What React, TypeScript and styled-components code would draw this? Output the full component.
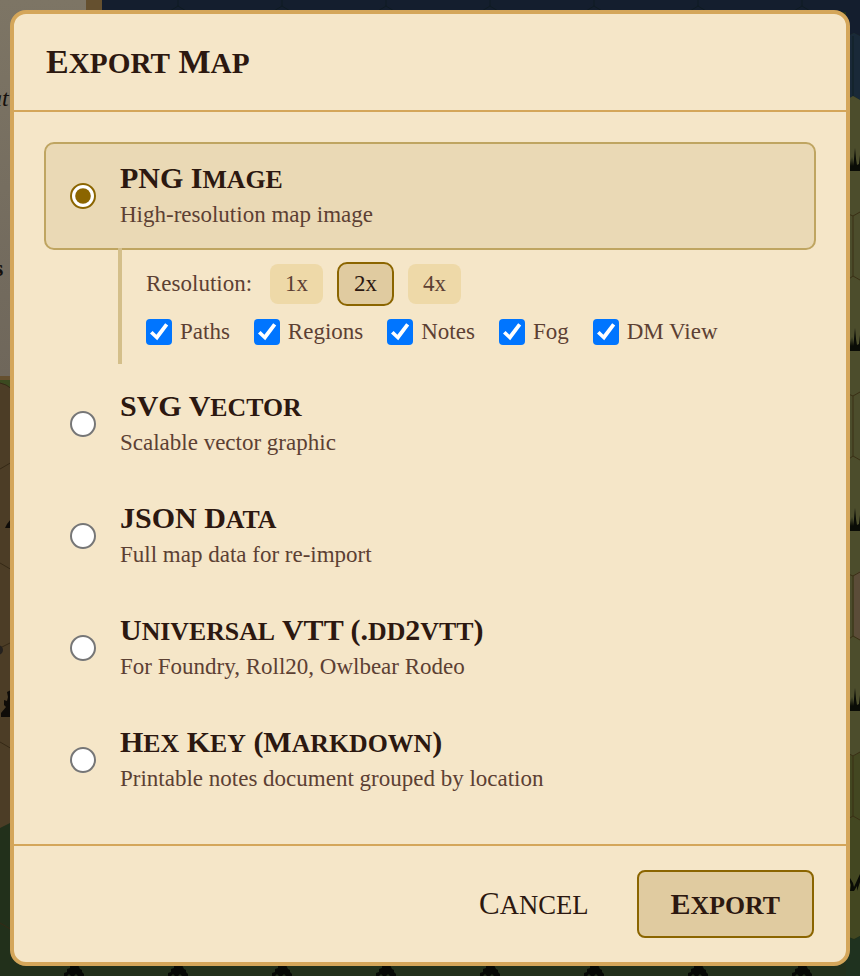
import React, { useState } from 'react';
import styled, { createGlobalStyle } from 'styled-components';

const GlobalStyle = createGlobalStyle`
  * { box-sizing: border-box; }
  body { margin: 0; background: #1d2c1c; }
`;

const serif = `'Liberation Serif', 'Times New Roman', serif`;

const Page = styled.div`
  position: relative;
  min-height: 100vh;
  overflow: hidden;
  font-family: ${serif};
  color: #2c1810;
`;

const Backdrop = styled.svg`
  position: absolute;
  inset: 0;
  width: 100%;
  height: 100%;
`;

const SidePanel = styled.aside`
  position: absolute;
  top: 0;
  left: 0;
  width: 102px;
  height: 380px;
  padding-top: 84px;
  overflow: hidden;
  background: linear-gradient(#7d7565, #6f675b);
  border-right: 16px solid #65502f;
  border-bottom: 4px solid #65502f;
`;

const PanelText = styled.p<{ $strong?: boolean }>`
  margin: 0 0 142px ${p => (p.$strong ? -6 : -10)}px;
  font-size: 24px;
  line-height: 28px;
  font-style: ${p => (p.$strong ? 'normal' : 'italic')};
  font-weight: ${p => (p.$strong ? 700 : 400)};
  color: #15100c;
`;

const Overlay = styled.div`
  position: relative;
  padding: 10px;
`;

const Dialog = styled.form`
  background: #f5e6c8;
  border: 4px solid #d4a65a;
  border-radius: 16px;
`;

const Header = styled.header`
  padding: 26px 32px;
  border-bottom: 2px solid #d4a65a;
`;

const Title = styled.h2`
  margin: 0;
  font-size: 34px;
  line-height: 44px;
  font-weight: 700;
`;

const SmallCaps = styled.span`
  font-size: 0.86em;
  line-height: 1;
  text-transform: uppercase;
`;

const Body = styled.div`
  display: flex;
  flex-direction: column;
  gap: 4px;
  padding: 30px;
`;

const Option = styled.label<{ $selected: boolean }>`
  display: flex;
  align-items: center;
  gap: 24px;
  height: 108px;
  padding: 0 24px;
  border: 2px solid ${p => (p.$selected ? '#bfa561' : 'transparent')};
  border-radius: 10px;
  background: ${p => (p.$selected ? '#ead9b5' : 'transparent')};
  cursor: pointer;
`;

const Radio = styled.input`
  width: 13px;
  height: 13px;
  margin: 0;
  zoom: 2;
  accent-color: #8b6500;
`;

const OptionName = styled.span`
  display: block;
  font-size: 30px;
  line-height: 38px;
  font-weight: 700;
`;

const OptionHint = styled.span`
  display: block;
  font-size: 23px;
  line-height: 36px;
  color: #5c4033;
`;

const Details = styled.div`
  display: flex;
  flex-direction: column;
  gap: 12px;
  margin: -6px 0 2px 74px;
  padding: 14px 0 18px 24px;
  border-left: 4px solid #d4bf8a;
  font-size: 23px;
  line-height: 28px;
  color: #5c4033;
`;

const Resolutions = styled.div`
  display: flex;
  align-items: center;
  gap: 14px;
  height: 44px;
`;

const ResolutionLabel = styled.span`
  padding-right: 4px;
`;

const Scale = styled.button<{ $active: boolean }>`
  padding: 6px 15px;
  border: ${p => (p.$active ? '2px solid #8b6500' : '0')};
  border-radius: ${p => (p.$active ? 10 : 8)}px;
  background: ${p => (p.$active ? '#e0cba0' : '#eed9a8')};
  color: ${p => (p.$active ? '#2c1810' : '#5c4033')};
  font: 23px/28px ${serif};
  cursor: pointer;
`;

const Layers = styled.div`
  display: flex;
  flex-wrap: wrap;
  gap: 24px;
`;

const Layer = styled.label`
  display: flex;
  align-items: center;
  gap: 8px;
  cursor: pointer;
`;

const tick = encodeURIComponent(
  `<svg xmlns="http://www.w3.org/2000/svg" viewBox="0 0 26 26"><path d="M4 14.6 6.6 12 10.4 15.8 19.2 4.2 22.2 6.4 11.2 21.2Z" fill="white"/></svg>`
);

const Check = styled.input`
  appearance: none;
  width: 26px;
  height: 26px;
  margin: 0;
  border: 2px solid #767676;
  border-radius: 4px;
  background: #fff;

  &:checked {
    border: 0;
    background: #0075ff url("data:image/svg+xml,${tick}") center / 26px no-repeat;
  }
`;

const Footer = styled.footer`
  display: flex;
  justify-content: flex-end;
  gap: 14px;
  padding: 24px 32px;
  border-top: 2px solid #d4a65a;
`;

const Action = styled.button<{ $primary?: boolean }>`
  height: 68px;
  padding: 0 32px;
  border: 2px solid ${p => (p.$primary ? '#8b6500' : 'transparent')};
  border-radius: 8px;
  background: ${p => (p.$primary ? '#e0cba0' : 'transparent')};
  color: #2c1810;
  font: ${p => (p.$primary ? '700 30px' : '400 31px')}/36px ${serif};
  cursor: pointer;
`;

function Caps({ text }: { text: string }) {
  return (
    <>
      {text.split(/([a-z]+)/).map((run, i) =>
        i % 2 ? <SmallCaps key={i}>{run}</SmallCaps> : run
      )}
    </>
  );
}

const formats = [
  { id: 'png', name: 'PNG Image', hint: 'High-resolution map image' },
  { id: 'svg', name: 'SVG Vector', hint: 'Scalable vector graphic' },
  { id: 'json', name: 'JSON Data', hint: 'Full map data for re-import' },
  { id: 'vtt', name: 'Universal VTT (.dd2vtt)', hint: 'For Foundry, Roll20, Owlbear Rodeo' },
  { id: 'key', name: 'Hex Key (Markdown)', hint: 'Printable notes document grouped by location' },
];

const layers = ['Paths', 'Regions', 'Notes', 'Fog', 'DM View'];
const grassRows = [171, 351, 531, 711];
const treeColumns = [73, 177, 281, 385, 489, 593, 697, 801];
const hexColumns = [178, 282, 386, 490, 594, 698, 802];

function MapBackdrop() {
  return (
    <Backdrop viewBox="0 0 860 976" preserveAspectRatio="xMidYMid slice" aria-hidden="true">
      <rect width="860" height="976" fill="#22301b" />
      <path d="M0 376H12V822L0 828Z" fill="#4c3d26" />
      <path d="M0 378H12V389Q6 384 0 383Z" fill="#3b4a20" />
      <path d="M0 383q6 1 12 6M0 469l12-7M0 563l12 7M0 648l12-6M0 742l12 7M0 923l12 7" stroke="#352916" fill="none" />
      <path d="M102 0H860V36L854 33 846 37V12H102Z" fill="#141e2e" />
      <path d="M846 37l8-4 6 3V100l-6-4-8 4Z" fill="#192938" />
      {hexColumns.map(x => (
        <path key={x} d={`M${x} 0v6l-8 5M${x} 6l8 5`} stroke="#0f1b22" fill="none" />
      ))}
      <path d="M846 100l7-4 7 4V815l-7 4-7-4Z" fill="#4c4d2c" />
      <path d="M854 575l6-4V640l-6-4Z" fill="#5b4c38" />
      <path d="M846 754l8 2 6-4V936l-6 3-8-3Z" fill="#434721" />
      <path d="M846 936l8 4 6-4V976H846Z" fill="#1f321f" />
      <path
        d="M846 213l7 3 7-4M853 216v60l-7 5M853 276l7 4M846 393l7 3 7-4M853 396v60l-7 5M853 456l7 4M846 573l7 3 7-4M853 576v60l-7 5M853 636l7 4M846 752l7 4 7-4M853 756v60l-7 4M853 816l7 4"
        stroke="#3a3015"
        fill="none"
      />
      <path d="M853 36v60" stroke="#112022" />
      {grassRows.map(y => (
        <path
          key={y}
          d={`M848 ${y}v-12h2l1 7 1-9 1 9 1-7 1-11 1 11 1 6 2-1 1-9 1 2v14Z`}
          fill="#0a0c06"
        />
      ))}
      <path d="M850 878l3 5 1 4 6-13v8l-3 9v-5l-3 5h-4l1-6-1-3Z" fill="#0a0c06" />
      <path d="M5 528l2-4 4-5v9Z" fill="#0f0c08" />
      <path d="M1 717v-4l5-6-2-2v-5l3 1 1-4-1-5 4-2v27Z" fill="#0f0c08" />
      <circle cx="-2" cy="650" r="5" fill="#26221e" />
      {treeColumns.map(x => (
        <path
          key={x}
          d={`M${x - 9} 976v-3l3-1v-3l3-1v-3h8l2 4 2 1v2l2 2v2h-6l-2-2-2 2h-3l-2-2-2 2Z`}
          fill="#060905"
        />
      ))}
    </Backdrop>
  );
}

export default function App() {
  const [format, setFormat] = useState('png');
  const [scale, setScale] = useState('2x');

  return (
    <Page>
      <GlobalStyle />
      <MapBackdrop />
      <SidePanel>
        <PanelText>at</PanelText>
        <PanelText $strong>s</PanelText>
      </SidePanel>
      <Overlay>
        <Dialog role="dialog" aria-label="Export Map" onSubmit={e => e.preventDefault()}>
          <Header>
            <Title><Caps text="Export Map" /></Title>
          </Header>
          <Body>
            {formats.map(f => (
              <React.Fragment key={f.id}>
                <Option $selected={format === f.id}>
                  <Radio
                    type="radio"
                    name="format"
                    value={f.id}
                    checked={format === f.id}
                    onChange={() => setFormat(f.id)}
                  />
                  <span>
                    <OptionName><Caps text={f.name} /></OptionName>
                    <OptionHint>{f.hint}</OptionHint>
                  </span>
                </Option>
                {f.id === 'png' && format === 'png' && (
                  <Details>
                    <Resolutions role="group" aria-label="Resolution">
                      <ResolutionLabel>Resolution:</ResolutionLabel>
                      {['1x', '2x', '4x'].map(s => (
                        <Scale key={s} type="button" $active={scale === s} onClick={() => setScale(s)}>
                          {s}
                        </Scale>
                      ))}
                    </Resolutions>
                    <Layers>
                      {layers.map(l => (
                        <Layer key={l}>
                          <Check type="checkbox" defaultChecked />
                          {l}
                        </Layer>
                      ))}
                    </Layers>
                  </Details>
                )}
              </React.Fragment>
            ))}
          </Body>
          <Footer>
            <Action type="button"><Caps text="Cancel" /></Action>
            <Action type="submit" $primary><Caps text="Export" /></Action>
          </Footer>
        </Dialog>
      </Overlay>
    </Page>
  );
}
